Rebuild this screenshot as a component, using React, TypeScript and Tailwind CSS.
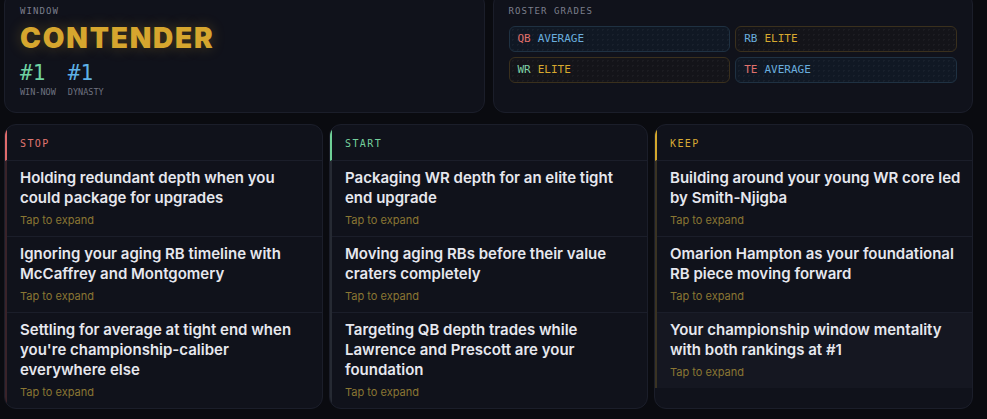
import React from 'react';

// ─── Data ─────────────────────────────────────────────────────────────────────

type Grade = { pos: string; posColor: string; grade: 'AVERAGE' | 'ELITE' };

const GRADES: Grade[] = [
  { pos: 'QB', posColor: 'text-[#e0706c]', grade: 'AVERAGE' },
  { pos: 'RB', posColor: 'text-[#6aaede]', grade: 'ELITE' },
  { pos: 'WR', posColor: 'text-[#7fd1a6]', grade: 'ELITE' },
  { pos: 'TE', posColor: 'text-[#e0706c]', grade: 'AVERAGE' },
];

type Column = {
  label: string;
  labelColor: string;
  accent: string;
  rail: string;
  items: string[];
};

const COLUMNS: Column[] = [
  {
    label: 'STOP',
    labelColor: 'text-[#e07670]',
    accent: 'border-[#e06b6b]',
    rail: 'border-[#3a2329]',
    items: [
      'Holding redundant depth when you could package for upgrades',
      'Ignoring your aging RB timeline with McCaffrey and Montgomery',
      "Settling for average at tight end when you're championship-caliber everywhere else",
    ],
  },
  {
    label: 'START',
    labelColor: 'text-[#74cf9c]',
    accent: 'border-[#6fcf97]',
    rail: 'border-[#262a33]',
    items: [
      'Packaging WR depth for an elite tight end upgrade',
      'Moving aging RBs before their value craters completely',
      'Targeting QB depth trades while Lawrence and Prescott are your foundation',
    ],
  },
  {
    label: 'KEEP',
    labelColor: 'text-[#d6a934]',
    accent: 'border-[#d4a72c]',
    rail: 'border-[#3a3322]',
    items: [
      'Building around your young WR core led by Smith-Njigba',
      'Omarion Hampton as your foundational RB piece moving forward',
      'Your championship window mentality with both rankings at #1',
    ],
  },
];

const MONO = "font-['DejaVu_Sans_Mono',monospace]";
const SANS = "font-['Inter','Noto_Sans',sans-serif]";

// ─── Pieces ───────────────────────────────────────────────────────────────────

function Label({ children }: { children: React.ReactNode }) {
  return (
    <div className={`${MONO} text-[9px] leading-3 tracking-[0.12em] text-[#7c7f8c] uppercase`}>{children}</div>
  );
}

function GradeChip({ g }: { g: Grade }) {
  const elite = g.grade === 'ELITE';
  return (
    <div
      className={`flex h-[26px] items-center gap-[7px] rounded-md border px-[8px] ${MONO} text-[11px] font-medium ${
        elite ? 'border-[#3a301d] bg-[#141419]' : 'border-[#1f3142] bg-[#101824]'
      } bg-[radial-gradient(circle,rgba(255,255,255,0.035)_1px,transparent_1px)] bg-[length:5px_5px]`}
    >
      <span className={g.posColor}>{g.pos}</span>
      <span className={elite ? 'text-[#d7a92f]' : 'text-[#6aaede]'}>{g.grade}</span>
    </div>
  );
}

function ColumnCard({ col }: { col: Column }) {
  const last = col.items.length - 1;
  return (
    <div className="overflow-hidden rounded-xl border border-[#1b1e2a] bg-[#10121b]">
      <div className={`flex h-9 items-center border-b border-l-2 border-b-[#1b1e2a] ${col.accent} pt-[2px] pl-[13px]`}>
        <span className={`${MONO} text-[10px] font-medium tracking-[0.14em] ${col.labelColor}`}>{col.label}</span>
      </div>
      <div className={`border-l-2 ${col.rail}`}>
        {col.items.map((text, i) => (
          <div
            key={i}
            className={`pt-[7px] pr-[9px] pb-2 pl-[13px] ${i < last ? 'border-b border-[#1b1e2a]' : ''} ${
              col.label === 'KEEP' && i === last ? 'bg-[#151721]' : ''
            }`}
          >
            <div className={`${SANS} text-[15px] leading-5 font-semibold text-[#e6e7ee]`}>{text}</div>
            <div className={`${SANS} mt-1 text-[11px] leading-4 text-[#8a7633]`}>Tap to expand</div>
          </div>
        ))}
      </div>
    </div>
  );
}

// ─── App ──────────────────────────────────────────────────────────────────────

export default function App() {
  return (
    <div className="h-[419px] w-[987px] overflow-hidden bg-[#0a0b10]">
      <div className="-mt-2 w-[973px] pl-1">
        {/* Top: window + roster grades */}
        <div className="grid grid-cols-2 gap-2">
          <div className="rounded-xl border border-[#1b1e2a] bg-[#10121b] px-[15px] pt-3 pb-[14px]">
            <Label>Window</Label>
            <div
              className={`${SANS} mt-[7px] text-[28px] leading-7 font-black tracking-[0.065em] text-[#d6a62e] [text-shadow:0_0_14px_rgba(214,166,46,0.3)]`}
            >
              CONTENDER
            </div>
            <div className="mt-[11px] flex gap-3">
              <div>
                <div className={`${MONO} text-[21px] leading-[21px] font-medium text-[#6fd3a2]`}>#1</div>
                <div className={`${MONO} mt-[2px] text-[8.5px] leading-3 text-[#6f7380]`}>WIN-NOW</div>
              </div>
              <div>
                <div className={`${MONO} text-[21px] leading-[21px] font-medium text-[#5fb1e6]`}>#1</div>
                <div className={`${MONO} mt-[2px] text-[8.5px] leading-3 text-[#6f7380]`}>DYNASTY</div>
              </div>
            </div>
          </div>

          <div className="rounded-xl border border-[#1b1e2a] bg-[#10121b] px-[15px] pt-3 pb-[14px]">
            <Label>Roster Grades</Label>
            <div className="mt-[9px] grid grid-cols-2 gap-[5px]">
              {GRADES.map(g => (
                <GradeChip key={g.pos} g={g} />
              ))}
            </div>
          </div>
        </div>

        {/* Stop / Start / Keep */}
        <div className="mt-[11px] grid grid-cols-3 gap-[6px]">
          {COLUMNS.map(col => (
            <ColumnCard key={col.label} col={col} />
          ))}
        </div>
      </div>
    </div>
  );
}
